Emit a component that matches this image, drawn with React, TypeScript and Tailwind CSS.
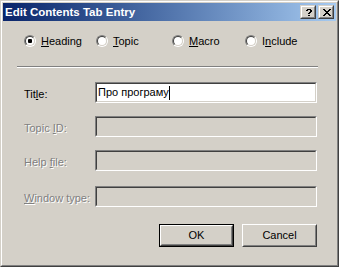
import React from "react";

const font = { fontFamily: '"Liberation Sans", Arial, sans-serif' };

function Radio({ checked }: { checked?: boolean }) {
  return (
    <div className="w-[12px] h-[12px] rounded-full border border-t-[#808080] border-l-[#808080] border-b-white border-r-white shrink-0">
      <div className="w-[10px] h-[10px] rounded-full border border-t-[#404040] border-l-[#404040] border-b-[#d4d0c8] border-r-[#d4d0c8] bg-white flex items-center justify-center">
        {checked && <div className="w-[4px] h-[4px] rounded-[1px] bg-black" />}
      </div>
    </div>
  );
}

function RadioItem({ label, checked, w }: { label: [string, string, string]; checked?: boolean; w: string }) {
  return (
    <div className={`flex items-center ${w}`}>
      <Radio checked={checked} />
      <span className="ml-[5px] text-[11px] leading-[13px] text-black">
        {label[0]}
        <span className="underline underline-offset-[1px]">{label[1]}</span>
        {label[2]}
      </span>
    </div>
  );
}

function Sunken({ children, white }: { children?: React.ReactNode; white?: boolean }) {
  return (
    <div className="w-[222px] h-[21px] border border-t-[#808080] border-l-[#808080] border-b-white border-r-white shrink-0">
      <div className={`w-full h-full border border-t-[#404040] border-l-[#404040] border-b-[#d4d0c8] border-r-[#d4d0c8] ${white ? "bg-white" : "bg-[#d4d0c8]"}`}>
        {children}
      </div>
    </div>
  );
}

function Row({ pre, u, post, disabled, white, children, mt }: { pre: string; u: string; post: string; disabled?: boolean; white?: boolean; children?: React.ReactNode; mt: string }) {
  return (
    <div className={`flex items-start h-[21px] ${mt}`}>
      <div className="w-[92px] h-[21px] pl-[21px] pt-[6px] shrink-0">
        <span
          className={`block text-[11px] leading-[13px] whitespace-nowrap ${disabled ? "text-[#808080] [text-shadow:1px_1px_0_#ffffff]" : "text-black"}`}
        >
          {pre}
          <span className="underline underline-offset-[1px]">{u}</span>
          {post}
        </span>
      </div>
      <Sunken white={white}>{children}</Sunken>
    </div>
  );
}

function PushButton({ label, def }: { label: string; def?: boolean }) {
  if (def) {
    return (
      <div className="w-[75px] h-[23px] border border-black">
        <div className="w-full h-full border border-t-white border-l-white border-b-[#404040] border-r-[#404040]">
          <div className="w-full h-full border border-t-[#d4d0c8] border-l-[#d4d0c8] border-b-[#808080] border-r-[#808080] flex items-center justify-center text-[11px] leading-[13px] text-black">
            {label}
          </div>
        </div>
      </div>
    );
  }
  return (
    <div className="w-[75px] h-[23px] border border-t-white border-l-white border-b-[#404040] border-r-[#404040]">
      <div className="w-full h-full border border-t-[#d4d0c8] border-l-[#d4d0c8] border-b-[#808080] border-r-[#808080] flex items-center justify-center text-[11px] leading-[13px] text-black">
        {label}
      </div>
    </div>
  );
}

function CaptionButton({ kind }: { kind: "help" | "close" }) {
  const closeRows: [number, number][][] = [
    [[0, 2], [6, 2]],
    [[1, 2], [5, 2]],
    [[2, 4]],
    [[3, 2]],
    [[2, 4]],
    [[1, 2], [5, 2]],
    [[0, 2], [6, 2]],
  ];
  const helpRows: [number, number][][] = [
    [[1, 4]],
    [[0, 2], [4, 2]],
    [[4, 2]],
    [[3, 2]],
    [[2, 2]],
    [],
    [[2, 2]],
  ];
  const rows = kind === "close" ? closeRows : helpRows;
  return (
    <div className="w-[16px] h-[14px] shrink-0 bg-[#d4d0c8] border border-t-[#d4d0c8] border-l-[#d4d0c8] border-b-[#404040] border-r-[#404040]">
      <div className="w-full h-full border border-t-white border-l-white border-b-[#808080] border-r-[#808080] relative">
        <svg width="8" height="7" className={`absolute ${kind === "close" ? "left-[3px]" : "left-[4px]"} top-[2px]`} shapeRendering="crispEdges">
          {rows.map((r, y) =>
            r.map(([x, w], i) => <rect key={`${y}-${i}`} x={x} y={y} width={w} height={1} fill="#000" />)
          )}
        </svg>
      </div>
    </div>
  );
}

export default function App() {
  return (
    <div style={font} className="w-[339px] h-[267px] bg-[#d4d0c8]">
      <div className="w-full h-full border border-t-[#d4d0c8] border-l-[#d4d0c8] border-b-[#404040] border-r-[#404040]">
        <div className="w-full h-full border border-t-white border-l-white border-b-[#808080] border-r-[#808080] p-[1px] flex flex-col">
          {/* Title bar */}
          <div className="h-[18px] shrink-0 flex items-center bg-gradient-to-r from-[#0a246a] to-[#a6caf0] pl-[2px] pr-[2px]">
            <span className="text-white font-bold text-[11.5px] leading-[14px] whitespace-nowrap flex-1">
              Edit Contents Tab Entry
            </span>
            <CaptionButton kind="help" />
            <div className="w-[2px]" />
            <CaptionButton kind="close" />
          </div>

          {/* Radios */}
          <div className="flex items-center mt-[14px] pl-[21px] h-[12px] shrink-0">
            <RadioItem label={["", "H", "eading"]} checked w="w-[72px]" />
            <RadioItem label={["", "T", "opic"]} w="w-[76px]" />
            <RadioItem label={["", "M", "acro"]} w="w-[73px]" />
            <RadioItem label={["I", "n", "clude"]} w="w-[70px]" />
          </div>

          {/* Separator */}
          <div className="ml-[14px] mt-[19px] w-[301px] shrink-0">
            <div className="h-[1px] bg-[#808080]" />
            <div className="h-[1px] bg-white" />
          </div>

          {/* Rows */}
          <Row pre="Tit" u="l" post="e:" white mt="mt-[14px]">
            <div className="flex items-center h-full pl-[1px]">
              <span className="text-[11px] leading-[13px] text-black whitespace-nowrap">Про програму</span>
              <div className="w-[1px] h-[14px] bg-black" />
            </div>
          </Row>
          <Row pre="Topic " u="I" post="D:" disabled mt="mt-[13px]" />
          <Row pre="Help " u="f" post="ile:" disabled mt="mt-[13px]" />
          <Row pre="" u="W" post="indow type:" disabled mt="mt-[15px]" />

          {/* Buttons */}
          <div className="flex mt-[17px] pl-[156px] gap-[8px] shrink-0">
            <PushButton label="OK" def />
            <PushButton label="Cancel" />
          </div>
        </div>
      </div>
    </div>
  );
}
